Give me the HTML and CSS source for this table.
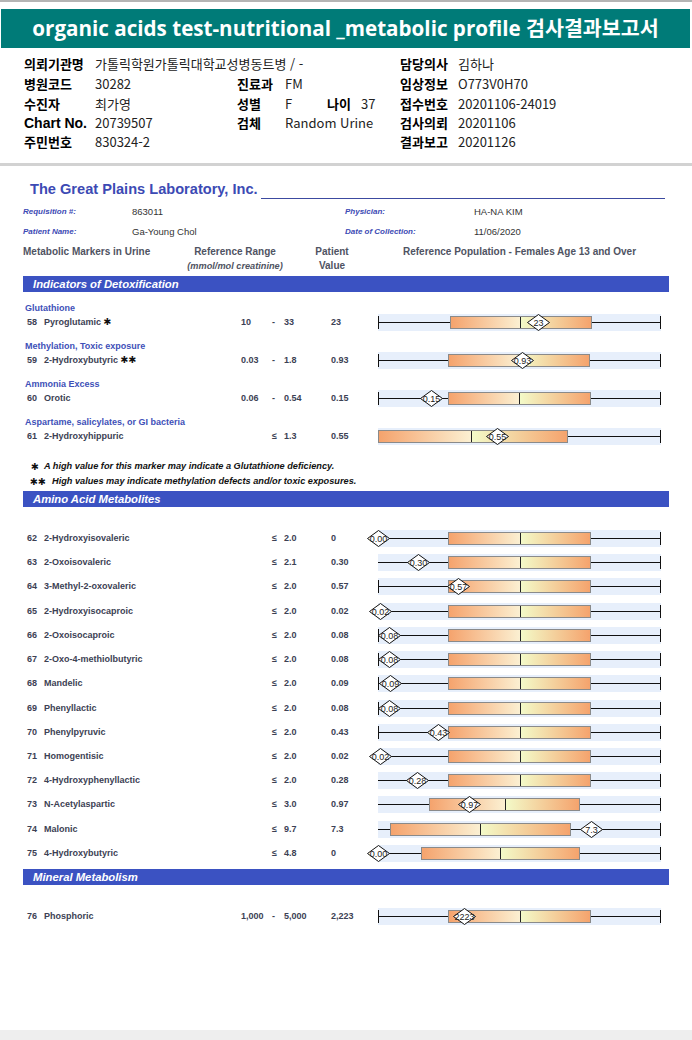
FILE: index.html
```html
<!DOCTYPE html>
<html lang="ko">
<head>
<meta charset="utf-8">
<title>organic acids test</title>
<link rel="stylesheet" href="styles.css">
</head>
<body>
<div class="page">
  <header class="top">
    <h1 class="title">organic acids test-nutritional _metabolic profile 검사결과보고서</h1>
  </header>

  <section class="info">
    <span class="lb">의뢰기관명</span><span class="vl s5">가톨릭학원가톨릭대학교성병동트병 / -</span><span class="lb">담당의사</span><span class="vl">김하나</span>
    <span class="lb">병원코드</span><span class="vl">30282</span><span class="lb">진료과</span><span class="vl s3">FM</span><span class="lb">임상정보</span><span class="vl">O773V0H70</span>
    <span class="lb">수진자</span><span class="vl">최가영</span><span class="lb">성별</span><span class="vl">F</span><span class="lb">나이</span><span class="vl">37</span><span class="lb">접수번호</span><span class="vl">20201106-24019</span>
    <span class="lb en">Chart No.</span><span class="vl">20739507</span><span class="lb">검체</span><span class="vl s3">Random Urine</span><span class="lb">검사의뢰</span><span class="vl">20201106</span>
    <span class="lb">주민번호</span><span class="vl s5">830324-2</span><span class="lb">결과보고</span><span class="vl">20201126</span>
  </section>

  <main class="report">
    <div class="lab">
      <div class="lab-name">The Great Plains Laboratory, Inc.</div>
      <div class="lab-rule"></div>
    </div>

    <div class="meta">
      <span class="mk">Requisition #:</span><span class="mv">863011</span><span class="mk">Physician:</span><span class="mv">HA-NA KIM</span>
      <span class="mk">Patient Name:</span><span class="mv">Ga-Young Chol</span><span class="mk">Date of Collection:</span><span class="mv">11/06/2020</span>
    </div>

    <div class="colhead">
      <span class="ch1">Metabolic Markers in Urine</span>
      <span class="ch2">Reference Range<br><i>(mmol/mol creatinine)</i></span>
      <span class="ch3">Patient<br>Value</span>
      <span class="ch4">Reference Population - Females Age 13 and Over</span>
    </div>

    <div class="sec">Indicators of Detoxification</div>
    <div class="detox">
      <div class="group">
        <div class="cat">Glutathione</div>
        <div class="row">
          <span>58</span><span>Pyroglutamic <b class="ast">✱</b></span><span>10</span><span class="op">-</span><span>33</span><span>23</span>
          <div class="chart">
            <div class="box" style="left:72px;width:142px"><i class="lo" style="width:70px"></i><i class="hi"></i></div>
            <svg class="dia" style="left:148.5px" viewBox="0 0 23 17"><polygon points="0.5,8.5 11.5,0.5 22.5,8.5 11.5,16.5"/><text x="11.5" y="11.5">23</text></svg>
          </div>
        </div>
      </div>
      <div class="group">
        <div class="cat">Methylation, Toxic exposure</div>
        <div class="row">
          <span>59</span><span>2-Hydroxybutyric <b class="ast">✱✱</b></span><span>0.03</span><span class="op">-</span><span>1.8</span><span>0.93</span>
          <div class="chart">
            <div class="box" style="left:70px;width:142px"><i class="lo" style="width:71px"></i><i class="hi"></i></div>
            <svg class="dia" style="left:132.5px" viewBox="0 0 23 17"><polygon points="0.5,8.5 11.5,0.5 22.5,8.5 11.5,16.5"/><text x="11.5" y="11.5">0.93</text></svg>
          </div>
        </div>
      </div>
      <div class="group">
        <div class="cat">Ammonia Excess</div>
        <div class="row">
          <span>60</span><span>Orotic</span><span>0.06</span><span class="op">-</span><span>0.54</span><span>0.15</span>
          <div class="chart">
            <div class="box" style="left:70px;width:143px"><i class="lo" style="width:71px"></i><i class="hi"></i></div>
            <svg class="dia" style="left:41.5px" viewBox="0 0 23 17"><polygon points="0.5,8.5 11.5,0.5 22.5,8.5 11.5,16.5"/><text x="11.5" y="11.5">0.15</text></svg>
          </div>
        </div>
      </div>
      <div class="group">
        <div class="cat">Aspartame, salicylates, or GI bacteria</div>
        <div class="row">
          <span>61</span><span>2-Hydroxyhippuric</span><span></span><span class="op">≤</span><span>1.3</span><span>0.55</span>
          <div class="chart">
            <div class="box" style="left:0;width:190px"><i class="lo" style="width:93px"></i><i class="hi"></i></div>
            <svg class="dia" style="left:107.5px" viewBox="0 0 23 17"><polygon points="0.5,8.5 11.5,0.5 22.5,8.5 11.5,16.5"/><text x="11.5" y="11.5">0.55</text></svg>
          </div>
        </div>
      </div>
    </div>

    <div class="notes">
      <p class="fn fn1"><b class="ast">✱</b><span>A high value for this marker may indicate a Glutathione deficiency.</span></p>
      <p class="fn fn2"><b class="ast">✱✱</b><span>High values may indicate methylation defects and/or toxic exposures.</span></p>
    </div>

    <div class="sec">Amino Acid Metabolites</div>
    <div class="rows">
      <div class="row">
        <span>62</span><span>2-Hydroxyisovaleric</span><span></span><span class="op">≤</span><span>2.0</span><span>0</span>
        <div class="chart">
          <div class="box" style="left:70px;width:143px"><i class="lo" style="width:72px"></i><i class="hi"></i></div>
          <svg class="dia" style="left:-11.5px" viewBox="0 0 23 17"><polygon points="0.5,8.5 11.5,0.5 22.5,8.5 11.5,16.5"/><text x="11.5" y="11.5">0.00</text></svg>
        </div>
      </div>
      <div class="row">
        <span>63</span><span>2-Oxoisovaleric</span><span></span><span class="op">≤</span><span>2.1</span><span>0.30</span>
        <div class="chart nl">
          <div class="box" style="left:70px;width:143px"><i class="lo" style="width:72px"></i><i class="hi"></i></div>
          <svg class="dia" style="left:28.5px" viewBox="0 0 23 17"><polygon points="0.5,8.5 11.5,0.5 22.5,8.5 11.5,16.5"/><text x="11.5" y="11.5">0.30</text></svg>
        </div>
      </div>
      <div class="row">
        <span>64</span><span>3-Methyl-2-oxovaleric</span><span></span><span class="op">≤</span><span>2.0</span><span>0.57</span>
        <div class="chart">
          <div class="box" style="left:70px;width:143px"><i class="lo" style="width:72px"></i><i class="hi"></i></div>
          <svg class="dia" style="left:68.5px" viewBox="0 0 23 17"><polygon points="0.5,8.5 11.5,0.5 22.5,8.5 11.5,16.5"/><text x="11.5" y="11.5">0.57</text></svg>
        </div>
      </div>
      <div class="row">
        <span>65</span><span>2-Hydroxyisocaproic</span><span></span><span class="op">≤</span><span>2.0</span><span>0.02</span>
        <div class="chart">
          <div class="box" style="left:70px;width:143px"><i class="lo" style="width:72px"></i><i class="hi"></i></div>
          <svg class="dia" style="left:-9.5px" viewBox="0 0 23 17"><polygon points="0.5,8.5 11.5,0.5 22.5,8.5 11.5,16.5"/><text x="11.5" y="11.5">0.02</text></svg>
        </div>
      </div>
      <div class="row">
        <span>66</span><span>2-Oxoisocaproic</span><span></span><span class="op">≤</span><span>2.0</span><span>0.08</span>
        <div class="chart">
          <div class="box" style="left:70px;width:143px"><i class="lo" style="width:72px"></i><i class="hi"></i></div>
          <svg class="dia" style="left:-0.5px" viewBox="0 0 23 17"><polygon points="0.5,8.5 11.5,0.5 22.5,8.5 11.5,16.5"/><text x="11.5" y="11.5">0.08</text></svg>
        </div>
      </div>
      <div class="row">
        <span>67</span><span>2-Oxo-4-methiolbutyric</span><span></span><span class="op">≤</span><span>2.0</span><span>0.08</span>
        <div class="chart">
          <div class="box" style="left:70px;width:143px"><i class="lo" style="width:72px"></i><i class="hi"></i></div>
          <svg class="dia" style="left:-0.5px" viewBox="0 0 23 17"><polygon points="0.5,8.5 11.5,0.5 22.5,8.5 11.5,16.5"/><text x="11.5" y="11.5">0.08</text></svg>
        </div>
      </div>
      <div class="row">
        <span>68</span><span>Mandelic</span><span></span><span class="op">≤</span><span>2.0</span><span>0.09</span>
        <div class="chart">
          <div class="box" style="left:70px;width:143px"><i class="lo" style="width:72px"></i><i class="hi"></i></div>
          <svg class="dia" style="left:0.5px" viewBox="0 0 23 17"><polygon points="0.5,8.5 11.5,0.5 22.5,8.5 11.5,16.5"/><text x="11.5" y="11.5">0.09</text></svg>
        </div>
      </div>
      <div class="row">
        <span>69</span><span>Phenyllactic</span><span></span><span class="op">≤</span><span>2.0</span><span>0.08</span>
        <div class="chart">
          <div class="box" style="left:70px;width:143px"><i class="lo" style="width:72px"></i><i class="hi"></i></div>
          <svg class="dia" style="left:-0.5px" viewBox="0 0 23 17"><polygon points="0.5,8.5 11.5,0.5 22.5,8.5 11.5,16.5"/><text x="11.5" y="11.5">0.08</text></svg>
        </div>
      </div>
      <div class="row">
        <span>70</span><span>Phenylpyruvic</span><span></span><span class="op">≤</span><span>2.0</span><span>0.43</span>
        <div class="chart">
          <div class="box" style="left:70px;width:143px"><i class="lo" style="width:72px"></i><i class="hi"></i></div>
          <svg class="dia" style="left:48.5px" viewBox="0 0 23 17"><polygon points="0.5,8.5 11.5,0.5 22.5,8.5 11.5,16.5"/><text x="11.5" y="11.5">0.43</text></svg>
        </div>
      </div>
      <div class="row">
        <span>71</span><span>Homogentisic</span><span></span><span class="op">≤</span><span>2.0</span><span>0.02</span>
        <div class="chart">
          <div class="box" style="left:70px;width:143px"><i class="lo" style="width:72px"></i><i class="hi"></i></div>
          <svg class="dia" style="left:-9.5px" viewBox="0 0 23 17"><polygon points="0.5,8.5 11.5,0.5 22.5,8.5 11.5,16.5"/><text x="11.5" y="11.5">0.02</text></svg>
        </div>
      </div>
      <div class="row">
        <span>72</span><span>4-Hydroxyphenyllactic</span><span></span><span class="op">≤</span><span>2.0</span><span>0.28</span>
        <div class="chart nl">
          <div class="box" style="left:70px;width:143px"><i class="lo" style="width:72px"></i><i class="hi"></i></div>
          <svg class="dia" style="left:27.5px" viewBox="0 0 23 17"><polygon points="0.5,8.5 11.5,0.5 22.5,8.5 11.5,16.5"/><text x="11.5" y="11.5">0.28</text></svg>
        </div>
      </div>
      <div class="row">
        <span>73</span><span>N-Acetylaspartic</span><span></span><span class="op">≤</span><span>3.0</span><span>0.97</span>
        <div class="chart nl">
          <div class="box" style="left:51px;width:151px"><i class="lo" style="width:76px"></i><i class="hi"></i></div>
          <svg class="dia" style="left:79.5px" viewBox="0 0 23 17"><polygon points="0.5,8.5 11.5,0.5 22.5,8.5 11.5,16.5"/><text x="11.5" y="11.5">0.97</text></svg>
        </div>
      </div>
      <div class="row">
        <span>74</span><span>Malonic</span><span></span><span class="op">≤</span><span>9.7</span><span>7.3</span>
        <div class="chart nl">
          <div class="box" style="left:12px;width:181px"><i class="lo" style="width:90px"></i><i class="hi"></i></div>
          <svg class="dia" style="left:201.5px" viewBox="0 0 23 17"><polygon points="0.5,8.5 11.5,0.5 22.5,8.5 11.5,16.5"/><text x="11.5" y="11.5">7.3</text></svg>
        </div>
      </div>
      <div class="row">
        <span>75</span><span>4-Hydroxybutyric</span><span></span><span class="op">≤</span><span>4.8</span><span>0</span>
        <div class="chart">
          <div class="box" style="left:43px;width:159px"><i class="lo" style="width:79px"></i><i class="hi"></i></div>
          <svg class="dia" style="left:-11.5px" viewBox="0 0 23 17"><polygon points="0.5,8.5 11.5,0.5 22.5,8.5 11.5,16.5"/><text x="11.5" y="11.5">0.00</text></svg>
        </div>
      </div>
    </div>

    <div class="sec sec-min">Mineral Metabolism</div>
    <div class="rows">
      <div class="row">
        <span>76</span><span>Phosphoric</span><span>1,000</span><span class="op">-</span><span>5,000</span><span>2,223</span>
        <div class="chart">
          <div class="box" style="left:70px;width:143px"><i class="lo" style="width:72px"></i><i class="hi"></i></div>
          <svg class="dia" style="left:74.5px" viewBox="0 0 23 17"><polygon points="0.5,8.5 11.5,0.5 22.5,8.5 11.5,16.5"/><text x="11.5" y="11.5">2223</text></svg>
        </div>
      </div>
    </div>
  </main>

  <footer class="foot"></footer>
</div>
</body>
</html>
```

FILE: styles.css
```css
* { box-sizing: border-box; }

body {
  margin: 0;
  background: #fff;
  font-family: "Liberation Sans", Arial, sans-serif;
}

.page {
  width: 692px;
  min-height: 1040px;
  display: flex;
  flex-direction: column;
}

/* ---------- title bar ---------- */
.top {
  border-top: 2px solid #b4b4b4;
  padding: 7px 2px 0 1px;
}

.title {
  margin: 0;
  height: 39px;
  background: #007b78;
  color: #fff;
  font: 700 20.6px/39px "Open Sans", "Noto Sans CJK KR", sans-serif;
  text-align: center;
  white-space: nowrap;
}

/* ---------- patient info ---------- */
.info {
  display: grid;
  grid-template-columns: 71px 142px 48px 42px 34px 39px 58px 1fr;
  grid-template-rows: 20px 20px 20px 19px 18px;
  align-items: center;
  padding: 5px 0 13px 24px;
  border-bottom: 3px solid #d2d2d2;
}

.lb {
  font: 700 13px/1 "Noto Sans CJK KR", sans-serif;
  color: #000;
  white-space: nowrap;
}

.lb.en {
  font: 700 14px/1 "Liberation Sans", Arial, sans-serif;
}

.vl {
  font: 400 13px/1 "Noto Sans CJK KR", sans-serif;
  color: #222;
  white-space: nowrap;
}

.s5 { grid-column: span 5; }
.s3 { grid-column: span 3; }

/* ---------- report ---------- */
.report {
  padding: 14px 23px 0 23px;
  color: #3c4154;
}

.lab {
  display: flex;
  height: 19px;
}

.lab-name {
  padding-left: 7px;
  font: 700 14.6px/19px "Liberation Sans", Arial, sans-serif;
  color: #3c4ab4;
  white-space: nowrap;
}

.lab-rule {
  flex: 1;
  height: 19px;
  margin: 0 4px 0 3px;
  border-bottom: 1px solid #3c4aa0;
}

.meta {
  display: grid;
  grid-template-columns: 109px 213px 129px 1fr;
  grid-auto-rows: 20px;
  align-items: center;
  margin-top: 3px;
}

.mk {
  font: italic 700 8px/1 "Liberation Sans", Arial, sans-serif;
  color: #3c4ab4;
}

.mv {
  font: 400 9.5px/1 "Liberation Sans", Arial, sans-serif;
  color: #333;
}

.colhead {
  display: grid;
  grid-template-columns: 160px 104px 25px 40px 51px 1fr;
  margin-top: 3px;
  height: 27px;
  font: 700 10px/14px "Liberation Sans", Arial, sans-serif;
  color: #4f5362;
}

.ch1 { white-space: nowrap; }
.ch2 { grid-column: 2; text-align: center; line-height: 14px; white-space: nowrap; }
.ch2 i { font-size: 9.2px; line-height: 13px; }
.ch3 { grid-column: 4; text-align: center; line-height: 14px; }
.ch4 { grid-column: 6; white-space: nowrap; }

.sec {
  margin-top: 4px;
  height: 16px;
  padding-left: 10px;
  background: #3b52c2;
  color: #fff;
  font: italic 700 11.3px/16px "Liberation Sans", Arial, sans-serif;
}

.detox {
  padding-top: 10px;
}

.group {
  margin-bottom: 9px;
}

.cat {
  height: 12px;
  padding-left: 2px;
  font: 700 9px/12px "Liberation Sans", Arial, sans-serif;
  color: #4050b8;
}

.row {
  display: grid;
  grid-template-columns: 17px 197px 30px 13px 47px 47px 283px;
  align-items: center;
  height: 17px;
  padding-left: 4px;
  font: 700 9px/17px "Liberation Sans", Arial, sans-serif;
  color: #3c4154;
  white-space: nowrap;
}

.op { padding-left: 1px; }

.ast {
  font: 700 9.5px/1 "DejaVu Sans", sans-serif;
  color: #111;
}

.notes {
  padding-top: 5px;
}

.fn {
  margin: 0;
  display: flex;
  height: 15px;
  align-items: center;
  font: italic 700 9.2px/15px "Liberation Sans", Arial, sans-serif;
  color: #111;
  white-space: nowrap;
}

.fn1 { padding-left: 8px; }
.fn1 .ast { width: 13px; }
.fn2 { padding-left: 7px; }
.fn2 .ast { width: 22px; }

.notes + .sec { margin-top: 2px; }

.rows {
  display: flex;
  flex-direction: column;
  gap: 7.23px;
  padding-top: 23px;
}

.sec-min { margin-top: 7px; }

/* ---------- box plot ---------- */
.chart {
  position: relative;
  height: 17px;
  background: #e7effb;
}

.chart::before {
  content: "";
  position: absolute;
  left: 0;
  right: 0;
  top: 2px;
  height: 13px;
  border-left: 1px solid #111;
  border-right: 1px solid #111;
  background: linear-gradient(#111, #111) 0 6px / 100% 1px no-repeat;
}

.chart.nl::before { border-left: none; }

.box {
  position: absolute;
  top: 2px;
  height: 13px;
  display: flex;
  border: 1px solid #8a8a8a;
}

.box .lo {
  height: 100%;
  border-right: 1px solid #222;
  background: linear-gradient(to right, #f5a36d, #fbf0d2);
}

.box .hi {
  flex: 1;
  height: 100%;
  background: linear-gradient(to right, #f3fac8, #f5a36d);
}

.dia {
  position: absolute;
  top: 0;
  width: 23px;
  height: 17px;
  overflow: visible;
}

.dia polygon {
  fill: #fff;
  stroke: #111;
  stroke-width: 1;
}

.dia text {
  font: 400 9px "Liberation Sans", Arial, sans-serif;
  fill: #222;
  text-anchor: middle;
}

.foot {
  margin-top: auto;
  height: 10px;
  background: #eeeeee;
}
```
